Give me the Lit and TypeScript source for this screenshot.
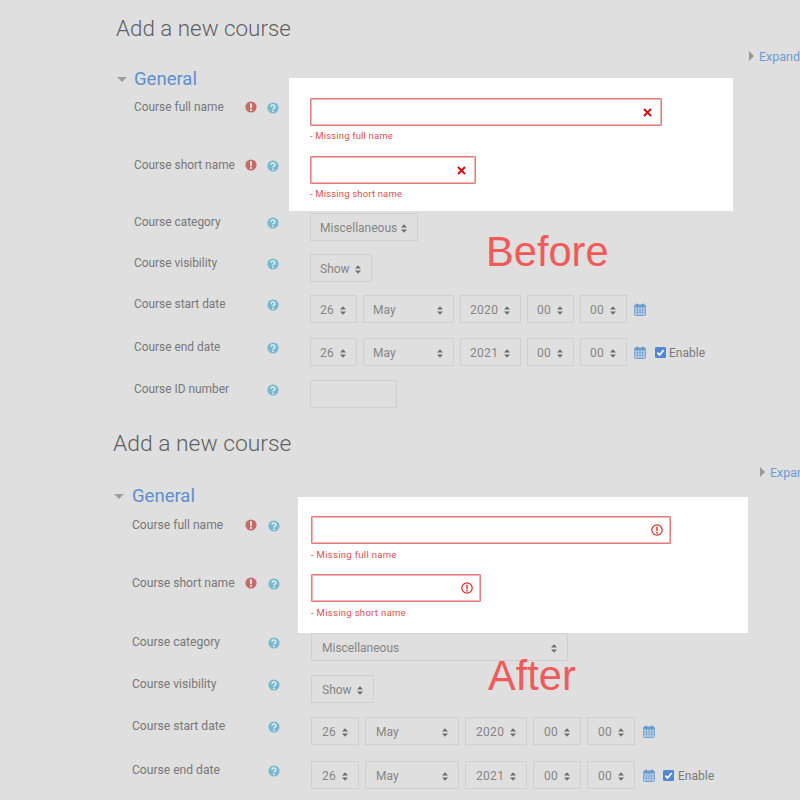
import { LitElement, html, css } from "lit";
import { customElement } from "lit/decorators.js";

const help = html`<svg class="ic" viewBox="0 0 12 12"><circle cx="6" cy="6" r="5.6" fill="#78b9cf"/><path d="M4.100 4.700a1.900 1.800 0 1 1 2.900 1.500c-.7.4-1 .7-1 1.300" fill="none" stroke="#eaf3f5" stroke-width="1.400"/><circle cx="6" cy="9.300" r=".9" fill="#eaf3f5"/></svg>`;
const warn = html`<svg class="ic" viewBox="0 0 12 12"><circle cx="6" cy="6" r="5.600" fill="#c86a6a"/><rect x="5" y="2.200" width="2" height="5" rx=".7" fill="#f3e3e3"/><circle cx="6" cy="9" r="1.100" fill="#f3e3e3"/></svg>`;
const cross = html`<svg class="state" viewBox="0 0 9 9"><path d="M1 1l7 7M8 1L1 8" stroke="#cc1111" stroke-width="2" fill="none"/></svg>`;
const alert = html`<svg class="state round" viewBox="0 0 12 12"><circle cx="6" cy="6" r="5.200" fill="none" stroke="#d42a2a" stroke-width="1.200"/><rect x="5.300" y="2.800" width="1.400" height="4.200" fill="#d42a2a"/><circle cx="6" cy="8.700" r=".9" fill="#d42a2a"/></svg>`;
const arrows = html`<svg class="arrows" viewBox="0 0 7 10"><path d="M3.500 0L7 3.800H0zM3.500 10L0 6.200h7z" fill="#6e6e6e"/></svg>`;
const calendar = html`<svg class="cal" viewBox="0 0 13 14"><rect x=".5" y="2" width="12" height="11.500" rx="1" fill="#bcd2e8" stroke="#6f9fd0"/><rect x="1" y="2" width="11" height="3" fill="#6f9fd0"/><rect x="2.500" y=".5" width="1.600" height="3" rx=".6" fill="#5d8fc4"/><rect x="8.900" y=".5" width="1.600" height="3" rx=".6" fill="#5d8fc4"/><path d="M1 7.500h11M1 10h11M3.700 5v8M6.500 5v8M9.300 5v8" stroke="#6f9fd0" stroke-width=".7"/></svg>`;
const checkbox = html`<svg class="check" viewBox="0 0 12 12"><rect width="12" height="12" rx="1.500" fill="#5486d6"/><path d="M2.600 6.200l2.400 2.500 4.400-5.400" fill="none" stroke="#fff" stroke-width="1.800"/></svg>`;

type Sel = [string, string];
const sel = ([text, cls]: Sel) => html`<div class="sel ${cls}"><span>${text}</span>${arrows}</div>`;

const dateRow = (year: string, enable: boolean) => html`<div class="dates">
  ${sel(["26", "d"])}${sel(["May", "m"])}${sel([year, "y"])}${sel(["00", "d"])}${sel(["00", "d"])}
  ${calendar}
  ${enable ? html`<label class="enable">${checkbox}<span>Enable</span></label>` : ""}
</div>`;

const errField = (cls: string, msg: string, icon: unknown) => html`<div class="field">
  <div class="err ${cls}">${icon}</div><div class="msg">- ${msg}</div></div>`;

@customElement("app-root")
export class AppRoot extends LitElement {
  static styles = css`
    :host {
      display: block; width: 800px; height: 800px; overflow: hidden;
      background: #dfdfdf; font-family: Roboto, "Liberation Sans", sans-serif; color: #777;
    }
    .panel { position: relative; box-sizing: border-box; overflow: hidden; }
    .before { height: 415px; --title-x: 116px; --title-size: 22.400px; --title-top: 8px; --title-bottom: 0px; --gen-x: 117px; --gen-gap: 7px; --exp-x: 749px;
      --cols: 106px 22px 22px 26px 1fr; --form-x: 134px; --form-top: 6px; --lh: 18px; --pad: 9px; --cal-m: 1px; --en-m: 3px; --en-g: 3px; --msg-sp: .16px; --msg-top: 4px;
      --rows: 58px 57px 41px 41px 43px 42px 28px; --hl-top: -20px; --hl-bottom: 2px; --hl-left: -21px; --hl-w: 444px;
      --full: 352px; --short: 166px; --cat: 108px; --show: 62px; --d: 47px; --m: 91px; --y: 61px; --gap: 6px; --xg: 9px; --label: 11.900px; }
    .after { height: 385px; --title-x: 113px; --title-size: 22.850px; --title-top: 9px; --title-bottom: -1px; --gen-x: 114px; --gen-gap: 8px; --exp-x: 760px;
      --cols: 108px 22px 23px 26px 1fr; --form-x: 132px; --form-top: 7px; --lh: 19px; --pad: 10px; --cal-m: 2px; --en-m: 2px; --en-g: 4px; --msg-sp: .3px; --msg-top: 5px;
      --rows: 58px 59px 42px 42px 44px 44px; --hl-top: -19px; --hl-bottom: 0px; --hl-left: -13px; --hl-w: 450px;
      --full: 360px; --short: 170px; --cat: 257px; --show: 63px; --d: 48px; --m: 94px; --y: 62px; --gap: 6px; --xg: 9px; --label: 12.100px; }

    h2 { margin: var(--title-top) 0 var(--title-bottom) var(--title-x); font-size: var(--title-size); line-height: 40px; font-weight: 300; color: #5f5f5f; }
    .expand { height: 16px; margin-left: var(--exp-x); display: flex; align-items: center; gap: 5px; white-space: nowrap;
      font-size: 12.500px; color: #6a9dd2; }
    .after .expand { height: 18px; }
    .tri-r { width: 0; height: 0; border-left: 5px solid #9a9a9a; border-top: 5px solid transparent; border-bottom: 5px solid transparent; }
    .general { box-sizing: border-box; height: 28px; padding-top: 2px; margin-left: var(--gen-x); display: flex; align-items: center; gap: var(--gen-gap); font-size: 18.500px; color: #5b90cf; }
    .tri-d { width: 0; height: 0; border-top: 5px solid #9f9f9f; border-left: 5.500px solid transparent; border-right: 5.500px solid transparent; }

    .form { display: grid; grid-template-columns: var(--cols); grid-template-rows: var(--rows);
      margin: var(--form-top) 0 0 var(--form-x); }
    .hl { grid-row: 1 / 3; grid-column: 5; background: #fff; width: var(--hl-w); margin: var(--hl-top) 0 var(--hl-bottom) var(--hl-left); }
    .label { grid-column: 1; font-size: var(--label); line-height: var(--lh); color: #777; white-space: nowrap; }
    .warn { grid-column: 2; display: flex; justify-content: center; padding-top: 3px; align-self: start; }
    .help { grid-column: 3; display: flex; justify-content: center; padding-top: 4px; align-self: start; }
    .ctl { grid-column: 5; min-width: 0; }
    .ic { width: 12px; height: 12px; display: block; }

    .err { box-sizing: border-box; height: 28px; display: flex; align-items: center; justify-content: flex-end;
      padding-right: var(--xg); border: 1px solid #e07c7c; box-shadow: inset 0 0 0 1px #f3b4b4; background: #fff; border-radius: 1px; }
    .full { width: var(--full); }
    .short { width: var(--short); }
    .msg { font-size: 9.500px; line-height: 12px; margin-top: var(--msg-top); color: #d9504f; letter-spacing: var(--msg-sp); }
    .state { width: 9px; height: 9px; }
    .state.round { width: 12px; height: 12px; margin-right: -2px; }

    .sel { box-sizing: border-box; height: 28px; display: flex; align-items: center; justify-content: space-between;
      padding: 2px 10px 0 var(--pad); border: 1px solid #d0d0d0; font-size: 12px; color: #858585; }
    .sel.cat { width: var(--cat); }
    .sel.show { width: var(--show); }
    .sel.d { width: var(--d); letter-spacing: .3px; }
    .sel.m { width: var(--m); }
    .sel.y { width: var(--y); letter-spacing: .3px; }
    .arrows { width: 6px; height: 9px; flex: none; }
    .dates { display: flex; gap: var(--gap); align-items: center; white-space: nowrap; }
    .cal { width: 12px; height: 13px; margin-left: var(--cal-m); flex: none; }
    .enable { display: flex; align-items: center; gap: var(--en-g); margin-left: var(--en-m); font-size: 12px; color: #7a7a7a; }
    .enable span { padding-top: 2px; }
    .check { width: 11px; height: 11px; }
    .idbox { box-sizing: border-box; width: 87px; height: 28px; border: 1px solid #d0d0d0; }

    .tag { position: absolute; font: 41.600px/48px "Liberation Sans", Arial, sans-serif; color: #f25a5a; }
    .before .tag { left: 486px; top: 228px; }
    .after .tag { left: 488px; top: 237px; }
  `;

  private row(i: number, label: string, ctl: unknown, isErr = false) {
    const r = `grid-row:${i + 1}`;
    return html`
      <div class="label" style=${r}>${label}</div>
      ${isErr ? html`<div class="warn" style=${r}>${warn}</div>` : ""}
      <div class="help" style=${r}>${help}</div>
      <div class="ctl" style=${r}>${ctl}</div>`;
  }

  private panel(kind: string, tag: string, icon: unknown, withId: boolean) {
    return html`<section class="panel ${kind}">
      <h2>Add a new course</h2>
      <div class="expand"><i class="tri-r"></i><span>Expand all</span></div>
      <div class="general"><i class="tri-d"></i><span>General</span></div>
      <div class="form">
        <div class="hl"></div>
        ${this.row(0, "Course full name", errField("full", "Missing full name", icon), true)}
        ${this.row(1, "Course short name", errField("short", "Missing short name", icon), true)}
        ${this.row(2, "Course category", sel(["Miscellaneous", "cat"]))}
        ${this.row(3, "Course visibility", sel(["Show", "show"]))}
        ${this.row(4, "Course start date", dateRow("2020", false))}
        ${this.row(5, "Course end date", dateRow("2021", true))}
        ${withId ? this.row(6, "Course ID number", html`<div class="idbox"></div>`) : ""}
      </div>
      <div class="tag">${tag}</div>
    </section>`;
  }

  render() {
    return html`
      ${this.panel("before", "Before", cross, true)}
      ${this.panel("after", "After", alert, false)}
    `;
  }
}
